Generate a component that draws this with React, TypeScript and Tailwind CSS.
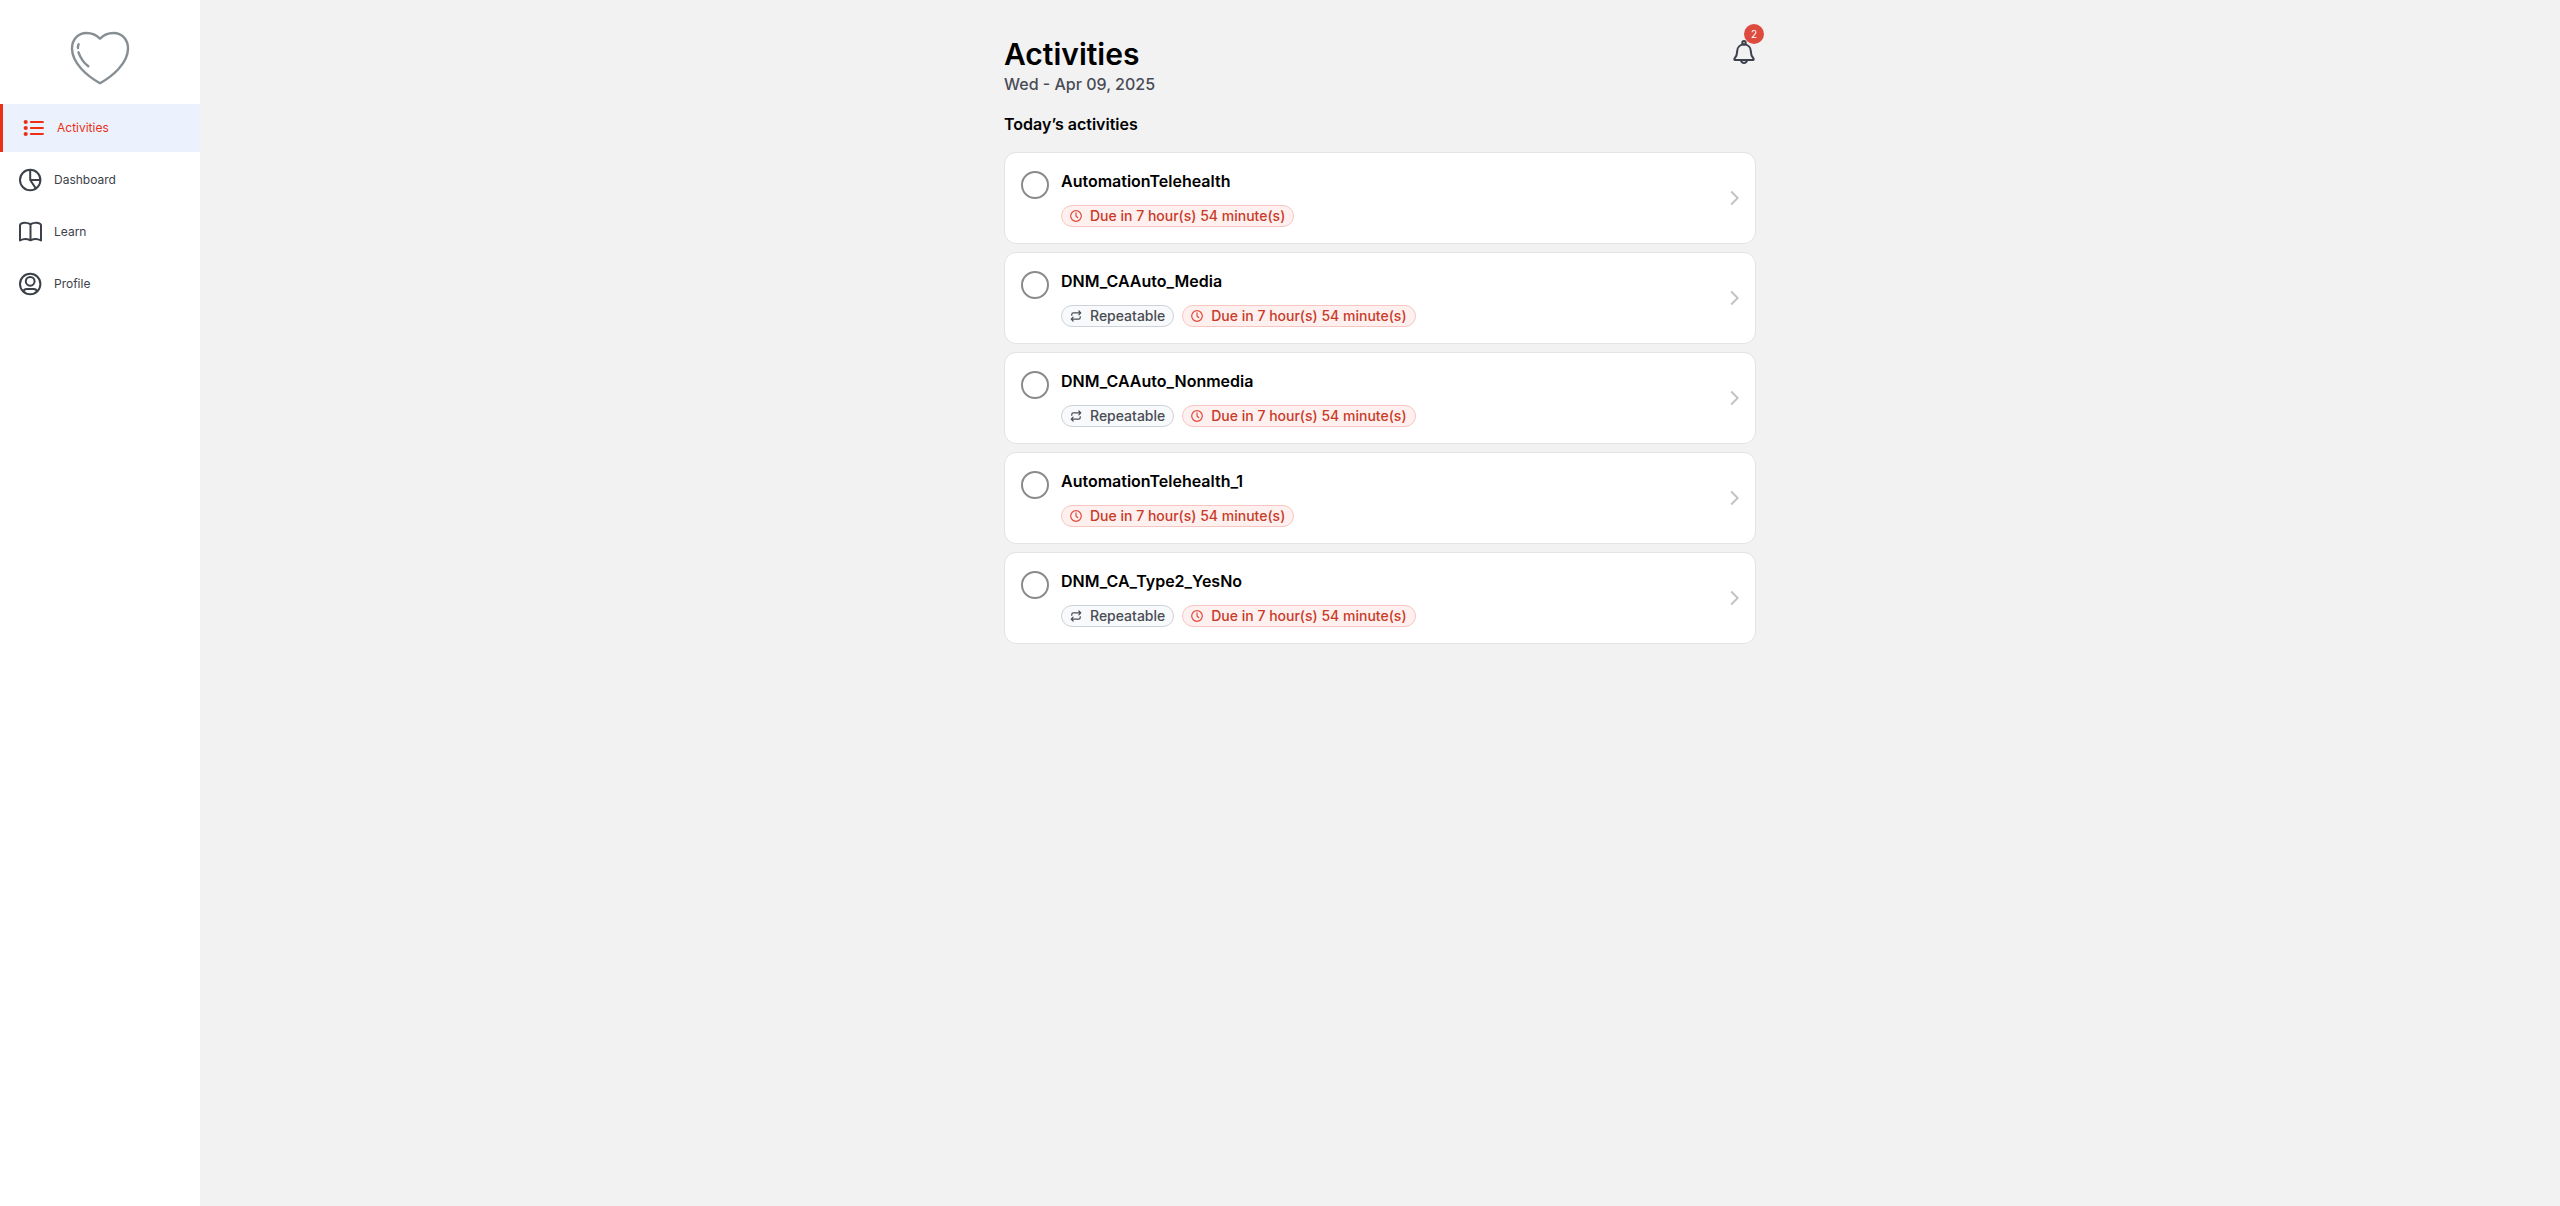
import React from 'react';

type IconProps = { className?: string };

const HeartLogo = () => (
  <svg className="h-[60px] w-[60px]" viewBox="0 0 60 60" fill="none" stroke="#868e93" strokeWidth="2.400" strokeLinecap="round" strokeLinejoin="round" aria-hidden="true">
    <path d="M30 8.7C26.5 5 21.500 3 16.500 3C8 3 2 9.500 2 18.500C2 33.500 18 46.500 30 53.200C42 46.500 58 33.500 58 18.500C58 9.500 52 3 43.500 3C38.500 3 33.500 5 30 8.700Z" />
    <path d="M8.600 14.200C8 15.600 7.800 16.800 7.900 18M8.500 22.300C10.500 28 14 33 18.300 36.300" />
  </svg>
);

const ListIcon = ({ className }: IconProps) => (
  <svg className={className} viewBox="0 0 24 24" fill="none" stroke="currentColor" strokeWidth="2.100" strokeLinecap="round" aria-hidden="true">
    <path d="M9.900 6H21.900M9.900 12H21.900M9.900 18H21.900" />
    <g fill="currentColor" stroke="none">
      <circle cx="4.700" cy="6" r="2.100" />
      <circle cx="4.700" cy="12" r="2.100" />
      <circle cx="4.700" cy="18" r="2.100" />
    </g>
  </svg>
);

const PieIcon = ({ className }: IconProps) => (
  <svg className={className} viewBox="0 0 24 24" fill="none" stroke="currentColor" strokeWidth="2" strokeLinecap="round" strokeLinejoin="round" aria-hidden="true">
    <circle cx="12.200" cy="12" r="10.200" />
    <path d="M12.200 2V12H22.200M12.200 12L17.700 20.300" />
  </svg>
);

const BookIcon = ({ className }: IconProps) => (
  <svg className={className} viewBox="0 0 24 24" fill="none" stroke="currentColor" strokeWidth="2" strokeLinecap="round" strokeLinejoin="round" aria-hidden="true">
    <path d="M12.500 4.500C10.800 2.600 5.500 2.300 2.800 3.800C2.300 4.100 2 4.500 2 5.200V20.500C5 18.800 9.500 18.900 12.500 20.300C15.500 18.900 20 18.800 23 20.500V5.200C23 4.500 22.700 4.100 22.200 3.800C19.500 2.300 14.200 2.600 12.500 4.500ZM12.500 4.500V20.300" />
  </svg>
);

const ProfileIcon = ({ className }: IconProps) => (
  <svg className={className} viewBox="0 0 24 24" fill="none" stroke="currentColor" strokeWidth="2" strokeLinecap="round" strokeLinejoin="round" aria-hidden="true">
    <circle cx="12.200" cy="12" r="10.200" />
    <circle cx="12.200" cy="9.300" r="4.400" />
    <path d="M5.400 19.300C5.900 17.500 7.100 16.900 8.700 16.900H15.700C17.300 16.900 18.500 17.500 19 19.300" />
  </svg>
);

const BellIcon = () => (
  <svg className="h-6 w-6" viewBox="0 0 24 24" fill="none" stroke="currentColor" strokeWidth="2" strokeLinecap="round" strokeLinejoin="round" aria-hidden="true">
    <circle cx="12" cy="2.800" r="1.700" />
    <path d="M12 4.600C8 4.600 5.300 7.300 5.200 11.100C5.100 14.700 4.600 16.200 2.700 18.200C2.100 18.900 2.100 20 3.100 20H20.900C21.900 20 21.900 18.900 21.300 18.200C19.400 16.200 18.900 14.700 18.800 11.100C18.700 7.300 16 4.600 12 4.600Z" />
    <path d="M8.900 20.200C9.300 21.900 10.400 22.900 12 22.900C13.600 22.900 14.700 21.900 15.100 20.200" />
  </svg>
);

const ClockIcon = () => (
  <svg className="h-3 w-3" viewBox="0 0 12 12" fill="none" stroke="#e04a3c" strokeWidth="1.200" strokeLinecap="round" strokeLinejoin="round" aria-hidden="true">
    <circle cx="6" cy="6" r="5.300" />
    <path d="M6 2.800V6L7.800 7.700" />
  </svg>
);

const RepeatIcon = () => (
  <svg className="h-3 w-3" viewBox="0 0 12 12" fill="none" stroke="#4a4f57" strokeWidth="1.200" strokeLinecap="round" strokeLinejoin="round" aria-hidden="true">
    <path d="M1.800 5.300V4.300C1.800 3.400 2.400 2.900 3.200 2.900H10.600M8.900 1L10.800 2.900L8.900 4.800M10.200 6.700V7.700C10.200 8.600 9.600 9.100 8.800 9.100H1.400M3.100 7.200L1.200 9.100L3.100 11" />
  </svg>
);

const ChevronIcon = () => (
  <svg className="h-4 w-[10px]" viewBox="0 0 10 16" fill="none" stroke="#c2c2c2" strokeWidth="2" aria-hidden="true">
    <path d="M2.200 1.500L8.700 8L2.200 14.500" />
  </svg>
);

const navItems = [
  { label: 'Activities', Icon: ListIcon, active: true },
  { label: 'Dashboard', Icon: PieIcon, active: false },
  { label: 'Learn', Icon: BookIcon, active: false },
  { label: 'Profile', Icon: ProfileIcon, active: false },
];

const activities = [
  { name: 'AutomationTelehealth', repeatable: false },
  { name: 'DNM_CAAuto_Media', repeatable: true },
  { name: 'DNM_CAAuto_Nonmedia', repeatable: true },
  { name: 'AutomationTelehealth_1', repeatable: false },
  { name: 'DNM_CA_Type2_YesNo', repeatable: true },
];

function Sidebar() {
  return (
    <aside className="w-[200px] shrink-0 bg-white">
      <div className="flex h-[104px] items-center justify-center pt-4">
        <HeartLogo />
      </div>
      <nav className="flex flex-col gap-1" aria-label="Main">
        {navItems.map(({ label, Icon, active }) => (
          <a
            key={label}
            href={'#' + label.toLowerCase()}
            aria-current={active ? 'page' : undefined}
            className={
              active
                ? 'flex h-12 items-center gap-3 border-l-[3px] border-[#eb3015] bg-[#ebf2fe] pl-[18px] text-xs text-[#eb3015]'
                : 'flex h-12 items-center gap-3 pl-[18px] text-xs text-[#3c4149]'
            }
          >
            <Icon className="h-6 w-6" />
            {label}
          </a>
        ))}
      </nav>
    </aside>
  );
}

function ActivityCard({ name, repeatable }: { name: string; repeatable: boolean }) {
  return (
    <li className="flex items-center rounded-xl border border-[#e2e3e7] bg-white py-4 pr-4 pl-4">
      <div className="flex grow items-start gap-3">
        <input
          type="checkbox"
          aria-label={'Complete ' + name}
          className="mt-[2px] h-7 w-7 shrink-0 appearance-none rounded-full border-2 border-[#8a8a8a] bg-white"
        />
        <div className="flex flex-col gap-3">
          <h3 className="text-base leading-6 font-semibold text-black">{name}</h3>
          <div className="flex gap-2">
            {repeatable && (
              <span className="flex h-[22px] items-center gap-2 rounded-full border border-[#cdd2da] bg-[#f8f9fb] px-2 text-sm font-medium text-[#484c54]">
                <RepeatIcon />
                Repeatable
              </span>
            )}
            <span className="flex h-[22px] items-center gap-2 rounded-full border border-[#f8c6c0] bg-[#fdf0ee] px-2 text-sm font-medium text-[#c93a28]">
              <ClockIcon />
              Due in 7 hour(s) 54 minute(s)
            </span>
          </div>
        </div>
      </div>
      <button type="button" aria-label={'Open ' + name}>
        <ChevronIcon />
      </button>
    </li>
  );
}

export default function App() {
  return (
    <div className="flex min-h-screen bg-[#f2f2f2] font-['Inter',sans-serif]">
      <Sidebar />
      <main className="grow px-4 pt-8">
        <div className="mx-auto w-full max-w-[752px]">
          <header className="flex items-start justify-between">
            <div>
              <h1 className="pt-1 text-[30px] leading-9 font-semibold text-black">Activities</h1>
              <p className="text-base leading-6 font-medium text-[#484b55]">Wed - Apr 09, 2025</p>
            </div>
            <button type="button" aria-label="Notifications" className="relative mt-2 text-[#3c4149]">
              <BellIcon />
              <span className="absolute -top-4 -right-2 flex h-5 w-5 items-center justify-center rounded-full bg-[#dd4b3e] text-[10px] text-white">2</span>
            </button>
          </header>
          <h2 className="mt-4 text-base leading-6 font-semibold text-black">Today’s activities</h2>
          <ul className="mt-4 flex flex-col gap-2">
            {activities.map((activity) => (
              <ActivityCard key={activity.name} {...activity} />
            ))}
          </ul>
        </div>
      </main>
    </div>
  );
}
